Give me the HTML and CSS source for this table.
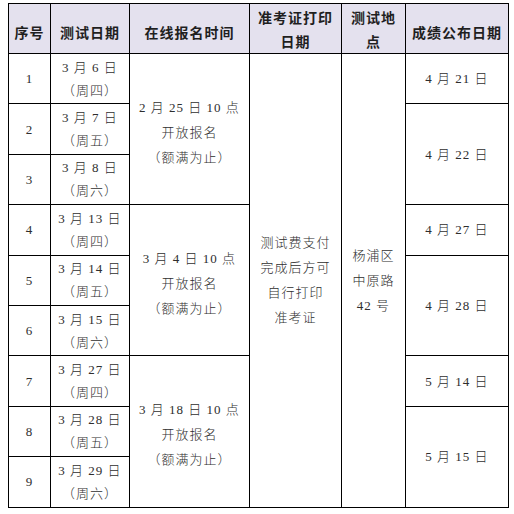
FILE: index.html
```html
<!DOCTYPE html>
<html lang="zh-CN">
<head>
<meta charset="utf-8">
<link rel="stylesheet" href="styles.css">
</head>
<body>
<table class="sched">
  <colgroup>
    <col class="c-no"><col class="c-date"><col class="c-reg"><col class="c-print"><col class="c-loc"><col class="c-res">
  </colgroup>
  <thead>
    <tr class="head">
      <th>序号</th>
      <th>测试日期</th>
      <th>在线报名时间</th>
      <th class="two">准考证打印<br>日期</th>
      <th class="two">测试地<br>点</th>
      <th>成绩公布日期</th>
    </tr>
  </thead>
  <tbody>
    <tr>
      <td>1</td>
      <td class="date">3 月 6 日<br>（周四）</td>
      <td rowspan="3" class="reg">2 月 25 日 10 点<br>开放报名<br>（额满为止）</td>
      <td rowspan="9" class="multi">测试费支付<br>完成后方可<br>自行打印<br>准考证</td>
      <td rowspan="9" class="multi">杨浦区<br>中原路<br>42 号</td>
      <td>4 月 21 日</td>
    </tr>
    <tr>
      <td>2</td>
      <td class="date">3 月 7 日<br>（周五）</td>
      <td rowspan="2">4 月 22 日</td>
    </tr>
    <tr>
      <td>3</td>
      <td class="date">3 月 8 日<br>（周六）</td>
    </tr>
    <tr>
      <td>4</td>
      <td class="date">3 月 13 日<br>（周四）</td>
      <td rowspan="3" class="reg">3 月 4 日 10 点<br>开放报名<br>（额满为止）</td>
      <td>4 月 27 日</td>
    </tr>
    <tr>
      <td>5</td>
      <td class="date">3 月 14 日<br>（周五）</td>
      <td rowspan="2">4 月 28 日</td>
    </tr>
    <tr>
      <td>6</td>
      <td class="date">3 月 15 日<br>（周六）</td>
    </tr>
    <tr>
      <td>7</td>
      <td class="date">3 月 27 日<br>（周四）</td>
      <td rowspan="3" class="reg">3 月 18 日 10 点<br>开放报名<br>（额满为止）</td>
      <td>5 月 14 日</td>
    </tr>
    <tr>
      <td>8</td>
      <td class="date">3 月 28 日<br>（周五）</td>
      <td rowspan="2">5 月 15 日</td>
    </tr>
    <tr>
      <td>9</td>
      <td class="date">3 月 29 日<br>（周六）</td>
    </tr>
  </tbody>
</table>
</body>
</html>
```

FILE: styles.css
```css
html, body {
  background: #ffffff;
}
body {
  margin: 3px 0 0 8px;
  font-family: "Liberation Serif", "Noto Sans CJK SC", serif;
  color: #2e2e2e;
}
.sched {
  border-collapse: collapse;
  table-layout: fixed;
  width: 500px;
  font-size: 13px;
}
.c-no { width: 42px; }
.c-date { width: 79px; }
.c-reg { width: 120px; }
.c-print { width: 92px; }
.c-loc { width: 64px; }
.c-res { width: 103px; }

.sched th,
.sched td {
  border: 1.5px solid #000000;
  text-align: center;
  vertical-align: middle;
  padding: 0;
  letter-spacing: 1px;
}
.sched tr.head {
  height: 50px;
}
.sched th {
  background: #e4e1ee;
  font-family: "Noto Sans CJK SC", sans-serif;
  font-weight: 700;
  font-size: 14px;
  color: #1f1f1f;
  line-height: 24px;
  padding-top: 6px;
}
.sched th.two {
  padding-top: 0;
}
.sched tbody tr {
  height: 50.4px;
}
.sched td {
  font-weight: 300;
  font-size: 13px;
  line-height: 25px;
}
.sched td.date {
  line-height: 23px;
}
.sched td.reg {
  padding-top: 6px;
}
```
